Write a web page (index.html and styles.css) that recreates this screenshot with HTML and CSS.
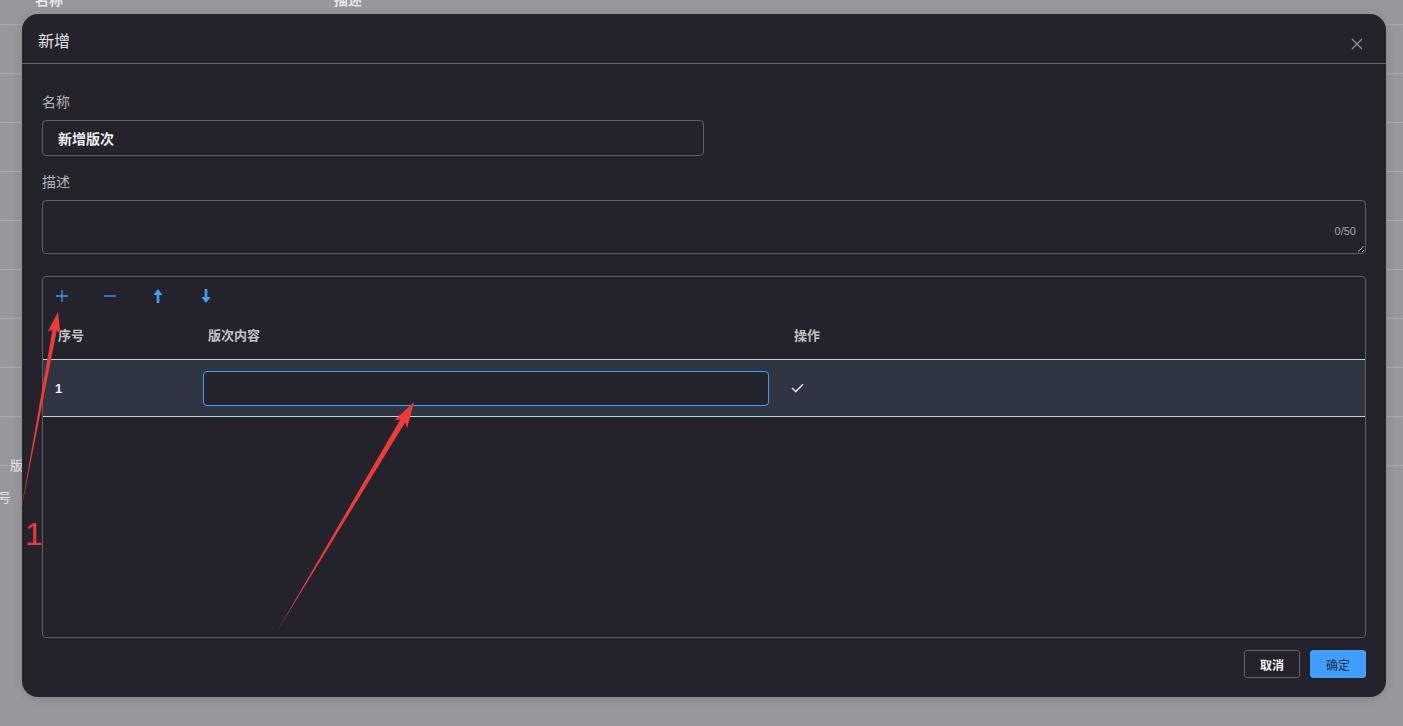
FILE: index.html
```html
<!DOCTYPE html>
<html lang="zh">
<head>
<meta charset="utf-8">
<title>新增</title>
<link rel="stylesheet" href="styles.css">
</head>
<body>
<div class="bg-page">
  <div class="bg-head"><span class="bg-c1">名称</span><span class="bg-c2">描述</span></div>
  <div class="bg-row"></div><div class="bg-row"></div><div class="bg-row"></div>
  <div class="bg-row"></div><div class="bg-row"></div><div class="bg-row"></div>
  <div class="bg-row"></div><div class="bg-row"></div><div class="bg-row"></div>
  <div class="bg-extra"><span class="bg-ban">版</span><span class="bg-hao">号</span></div>
</div>

<div class="modal">
  <div class="modal-header">
    <span class="modal-title">新增</span>
    <svg class="close" width="12" height="12" viewBox="0 0 12 12"><path d="M1 1L11 11M11 1L1 11" stroke="#8e8e95" stroke-width="1.3" fill="none"/></svg>
  </div>
  <div class="modal-body">
    <div class="label">名称</div>
    <div class="input name-input">新增版次</div>
    <div class="label label2">描述</div>
    <div class="textarea-wrap">
      <textarea class="textarea"></textarea>
      <span class="counter">0/50</span>
    </div>
    <div class="table-box">
      <div class="toolbar">
        <span class="tool"><svg width="12" height="12" viewBox="0 0 12 12"><path d="M6 0V12M0 6H12" stroke="#409eff" stroke-width="1.3" fill="none"/></svg></span>
        <span class="tool"><svg width="12" height="12" viewBox="0 0 12 12"><path d="M0 6H12" stroke="#409eff" stroke-width="1.3" fill="none"/></svg></span>
        <span class="tool"><svg width="10" height="14" viewBox="0 0 10 14"><polygon points="5,0 9.5,6 6.3,6 6.3,14 3.7,14 3.7,6 0.5,6" fill="#409eff"/></svg></span>
        <span class="tool"><svg width="10" height="14" viewBox="0 0 10 14"><polygon points="5,14 9.5,8 6.3,8 6.3,0 3.7,0 3.7,8 0.5,8" fill="#409eff"/></svg></span>
      </div>
      <div class="grid head">
        <div class="th">序号</div>
        <div class="th">版次内容</div>
        <div class="th">操作</div>
      </div>
      <div class="grid row">
        <div class="td td-no">1</div>
        <div class="td td-input"><div class="cell-input"></div></div>
        <div class="td td-op"><svg width="13" height="10" viewBox="0 0 13 10"><path d="M1 5L4.8 8.6L12 1.2" stroke="#dcdcdf" stroke-width="1.6" fill="none"/></svg></div>
      </div>
    </div>
    <div class="footer">
      <button class="btn btn-cancel">取消</button>
      <button class="btn btn-ok">确定</button>
    </div>
  </div>
</div>

<svg class="annot" width="1403" height="726" viewBox="0 0 1403 726">
  <g transform="translate(21 511) rotate(-79.47)">
    <polygon points="0,0 184,-2.2 181,-6.5 202.4,0 181,6.5 184,2.2" fill="#ef3a3a"/>
  </g>
  <g transform="translate(276 633) rotate(-59.14)">
    <polygon points="0,0 247,-2.8 243,-7.5 269.1,0 243,7.5 247,2.8" fill="#ef3a3a"/>
  </g>
  <text x="25" y="545" class="annot-num">1</text>
</svg>
</body>
</html>
```
FILE: styles.css
```css
* { box-sizing: border-box; }

body {
  margin: 0;
  width: 1403px;
  height: 726px;
  overflow: hidden;
  position: relative;
  background: #98979c;
  font-family: "Liberation Sans", "Noto Sans CJK SC", sans-serif;
}

/* background page (under overlay) */
.bg-page { width: 1403px; }
.bg-head {
  height: 25px;
  border-bottom: 1px solid #acabb0;
  display: flex;
  font-size: 14px;
  line-height: 18px;
  color: #e6e6e8;
  font-weight: bold;
}
.bg-c1 { margin-top: -9px; margin-left: 35px; width: 299px; }
.bg-c2 { margin-top: -9px; }
.bg-row { height: 49px; border-bottom: 1px solid #acabb0; }
.bg-extra {
  position: relative;
  height: 60px;
  font-size: 13px;
  color: #e6e6e8;
  display: flex;
  flex-direction: column;
}
.bg-ban { margin-top: -8px; margin-left: 10px; line-height: 16px; }
.bg-hao { margin-top: 16px; margin-left: -2px; line-height: 16px; }

/* modal */
.modal {
  position: absolute;
  left: 22px;
  top: 14px;
  width: 1364px;
  height: 683px;
  background: #24232c;
  border-radius: 16px;
  box-shadow: 0 2px 10px rgba(0, 0, 0, 0.12);
  display: flex;
  flex-direction: column;
}
.modal-header {
  height: 50px;
  padding: 2px 23px 0 16px;
  border-bottom: 1px solid #65646c;
  display: flex;
  align-items: center;
  justify-content: space-between;
}
.modal-title {
  font-size: 16px;
  color: #e2e2e4;
}
.close { margin-top: 9px; }

.modal-body {
  padding: 28px 20px 0 20px;
  display: flex;
  flex-direction: column;
}
.label {
  font-size: 14px;
  line-height: 20px;
  color: #b4b4b8;
  margin-bottom: 8px;
}
.label2 { margin-top: 16px; }

.input {
  height: 36px;
  border: 1px solid #5e5d65;
  border-radius: 4px;
  padding: 0 15px 1px;
  display: flex;
  align-items: center;
}
.name-input {
  width: 662px;
  font-size: 14px;
  font-weight: bold;
  color: #ececee;
}

.textarea-wrap {
  position: relative;
  height: 54px;
}
.textarea {
  display: block;
  width: 100%;
  height: 54px;
  background: transparent;
  border: 1px solid #5e5d65;
  border-radius: 4px;
  resize: vertical;
  outline: none;
  color: #eee;
}
.counter {
  position: absolute;
  right: 10px;
  bottom: 16px;
  font-size: 11px;
  line-height: 14px;
  color: #a4a4a9;
}

.table-box {
  margin-top: 22px;
  height: 362px;
  border: 1px solid #5e5d65;
  border-radius: 4px;
}
.toolbar {
  height: 38px;
  padding-left: 7px;
  display: flex;
  align-items: center;
  gap: 24px;
}
.tool {
  width: 24px;
  height: 16px;
  display: flex;
  align-items: center;
  justify-content: center;
}
.grid {
  display: grid;
  grid-template-columns: 150px 586px 1fr;
}
.head {
  height: 45px;
  border-bottom: 1px solid #c6d2e0;
  align-items: center;
}
.th {
  padding-left: 15px;
  font-size: 13px;
  font-weight: bold;
  color: #c2c2c6;
  padding-bottom: 5px;
}
.row {
  height: 57px;
  background: #303641;
  border-bottom: 1px solid #c6d2e0;
  align-items: center;
}
.td-no {
  padding-left: 12px;
  font-size: 13px;
  font-weight: bold;
  color: #f0f0f2;
}
.td-input { padding-left: 10px; }
.cell-input {
  width: 566px;
  height: 35px;
  background: #23232c;
  border: 1px solid #409eff;
  border-radius: 4px;
}
.td-op {
  padding-left: 12px;
  display: flex;
  align-items: center;
}

.footer {
  margin-top: 12px;
  display: flex;
  justify-content: flex-end;
  gap: 10px;
}
.btn {
  width: 56px;
  height: 28px;
  border-radius: 3px;
  font-size: 12px;
  font-family: "Liberation Sans", "Noto Sans CJK SC", sans-serif;
  padding: 0;
}
.btn-cancel {
  background: transparent;
  border: 1px solid #65646c;
  color: #f2f2f4;
  font-weight: bold;
}
.btn-ok {
  background: #409eff;
  border: 1px solid #409eff;
  color: #1f2f45;
}

.annot {
  position: absolute;
  left: 0;
  top: 0;
  pointer-events: none;
}
.annot-num {
  font-family: "Liberation Sans", sans-serif;
  font-size: 32px;
  fill: #ef3a3a;
}
```
